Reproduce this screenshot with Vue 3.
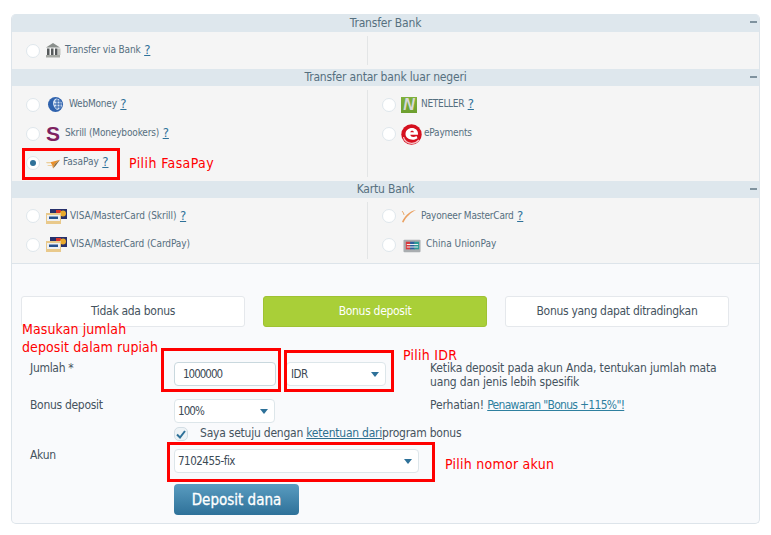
<script setup>
const sections = [
  { title: 'Transfer Bank', cols: [
    [{ name: 'Transfer via Bank', q: true, icon: 'bank', w: 21, ls: -0.12 }],
    [],
  ]},
  { title: 'Transfer antar bank luar negeri', cols: [
    [
      { name: 'WebMoney', q: true, icon: 'wm', w: 25, ls: -0.2 },
      { name: 'Skrill (Moneybookers)', q: true, icon: 'skrill', w: 21, ls: -0.15 },
      { name: 'FasaPay', q: true, icon: 'fasa', w: 19, ls: 0, checked: true },
    ],
    [
      { name: 'NETELLER', q: true, icon: 'net', w: 20, ls: -0.3 },
      { name: 'ePayments', icon: 'epay', w: 23, ls: -0.2 },
    ],
  ]},
  { title: 'Kartu Bank', cols: [
    [
      { name: 'VISA/MasterCard (Skrill)', q: true, icon: 'visa', w: 26, ls: -0.05 },
      { name: 'VISA/MasterCard (CardPay)', icon: 'visa', w: 26, ls: -0.1 },
    ],
    [
      { name: 'Payoneer MasterCard', q: true, icon: 'pay', w: 20, ls: -0.2 },
      { name: 'China UnionPay', icon: 'cup', w: 25, ls: 0 },
    ],
  ]},
]
</script>

<template>
  <div class="page">
    <div class="panel">
      <section v-for="s in sections" :key="s.title">
        <header class="head">{{ s.title }}<span class="minus"></span></header>
        <div class="body">
          <div v-for="(col, ci) in s.cols" :key="ci" class="col">
            <div v-for="m in col" :key="m.name" class="method">
              <span class="radio" :class="{ on: m.checked }"></span>
              <span class="icon" :class="'i-' + m.icon" :style="{ width: m.w + 'px' }">
                <svg v-if="m.icon === 'bank'" width="16" height="15" viewBox="0 0 16 15">
                  <path d="M8 0 15 4.500H1z" fill="#8a8f8c"/>
                  <path d="M2 5.500h2.500v6.500H2zM6 5.500h2.500v6.500H6zM10 5.500h2.500v6.500H10z" fill="#55595a"/>
                  <path d="M1 12h14v2.500H1z" fill="#a5a8a3"/>
                  <path d="M13 5.500h2.500v6.500H13z" fill="#c2c4bf"/>
                </svg>
                <svg v-else-if="m.icon === 'wm'" width="17" height="17" viewBox="0 0 17 17">
                  <circle cx="8.500" cy="8.500" r="7.500" fill="#2f62ad"/>
                  <path d="M9 2.500a6 6 0 0 1 6 6 6 6 0 0 1-5 5.500C7 12 6 9 6 7c0-2 1-3.500 3-4.500z" fill="#d6e2f2"/>
                  <path d="M8 5h7M7 8h8M8 11h6M10 3v10M13 3v10" stroke="#2f62ad" stroke-width="1" fill="none"/>
                </svg>
                <span v-else-if="m.icon === 'skrill'" class="glyph-s">S</span>
                <svg v-else-if="m.icon === 'fasa'" width="14" height="10" viewBox="0 0 16 10">
                  <path d="M5 3 16 0 10 5 8 10 7 6z" fill="#e8912d"/>
                  <path d="M0 3h6L5 4H1zM1 6h6v1H3z" fill="#e9c27d"/>
                  <path d="M8 10 10 5 16 0 11 7z" fill="#8a6a3a"/>
                </svg>
                <span v-else-if="m.icon === 'net'" class="glyph-n">N</span>
                <svg v-else-if="m.icon === 'epay'" width="21" height="21" viewBox="0 0 21 21">
                  <circle cx="10.500" cy="10.500" r="10.200" fill="#d5101f"/>
                  <path d="M2.500 13C3 17 7 19.500 11 19.300c3-.1 5.300-1.300 7-3.300" stroke="#f6c3c7" stroke-width="1.300" fill="none"/>
                  <path d="M4.500 10c0-3.500 3-6 6.500-6 3.400 0 6 2.200 6 5.800 0 .4 0 .7-.1.900H9.300c.3 1.500 1.500 2.200 3 2.200 1.100 0 2.300-.4 3.200-1l1 2.300c-1.200.9-2.900 1.500-4.700 1.500-4.300 0-7.300-2.300-7.300-5.700z" fill="#fff"/>
                  <path d="M9.200 8.300h3.900c-.3-1-1-1.600-2-1.600s-1.700.6-1.900 1.600z" fill="#d5101f"/>
                </svg>
                <svg v-else-if="m.icon === 'visa'" width="21" height="15" viewBox="0 0 21 15">
                  <rect x="4" y="0" width="17" height="10" fill="#27306b"/>
                  <rect x="10" y="1" width="5" height="4" fill="#d8332b"/>
                  <circle cx="17" cy="4.500" r="3" fill="#e9a92c"/>
                  <rect x="0" y="4" width="15" height="11" fill="#e9c98b"/>
                  <rect x="1" y="6" width="13" height="6" fill="#eef0f2"/>
                  <path d="M3 7.500h9v2.500H3z" fill="#26508f"/>
                </svg>
                <svg v-else-if="m.icon === 'pay'" width="16" height="14" viewBox="0 0 16 14">
                  <path d="M1 2c1 1 2 3 2 4" stroke="#e9a96a" stroke-width="1" fill="none"/>
                  <path d="M1 13C3 8 8 2 15 1 10 3.500 5 8 2.500 13.500z" fill="#eaa162"/>
                </svg>
                <svg v-else-if="m.icon === 'cup'" width="18" height="14" viewBox="0 0 19 14">
                  <rect x="0.500" y="0.500" width="18" height="13" rx="1" fill="#a9adb0"/>
                  <rect x="3" y="2.500" width="5" height="8" fill="#d83a3d"/>
                  <rect x="7.500" y="2.500" width="5" height="8" fill="#2b5e9c"/>
                  <rect x="12" y="2.500" width="5" height="8" fill="#2a9a95"/>
                  <path d="M4 5h12v1H4zM4 7.500h12v1H4z" fill="#eef0f2"/>
                </svg>
              </span>
              <span class="mname" :style="{ letterSpacing: m.ls + 'px' }">{{ m.name }}</span>
              <a v-if="m.q" class="q">?</a>
            </div>
          </div>
        </div>
      </section>

      <div class="bottom">
        <div class="tabs">
          <div class="tab">Tidak ada bonus</div>
          <div class="tab active">Bonus deposit</div>
          <div class="tab">Bonus yang dapat ditradingkan</div>
        </div>

        <div class="form">
          <div class="row row-amount">
            <label class="lbl">Jumlah *</label>
            <div class="fld">
              <div class="input">1000000</div>
              <div class="select cur">IDR<i class="caret"></i></div>
            </div>
            <p class="note">Ketika deposit pada akun Anda, tentukan jumlah mata uang dan jenis lebih spesifik</p>
          </div>
          <div class="row row-bonus">
            <label class="lbl">Bonus deposit</label>
            <div class="fld">
              <div class="select pct">100%<i class="caret"></i></div>
            </div>
            <p class="note">Perhatian! <a class="link tight">Penawaran "Bonus +115%"!</a></p>
          </div>
          <div class="row row-check">
            <span></span>
            <div class="agree">
              <span class="check">
                <svg width="10" height="9" viewBox="0 0 10 9"><path d="M1 4.500 4 7.500 9 1" stroke="#2e7199" stroke-width="2" fill="none"/></svg>
              </span>
              <span class="agree-text">Saya setuju dengan <a class="link dark">ketentuan dari</a>program bonus</span>
            </div>
          </div>
          <div class="row row-account">
            <label class="lbl">Akun</label>
            <div class="select acct">7102455-fix<i class="caret"></i></div>
          </div>
          <div class="row row-btn">
            <span></span>
            <button class="submit">Deposit dana</button>
          </div>
        </div>
      </div>
    </div>

    <span class="mark m-fasa"></span>
    <span class="mark m-amount"></span>
    <span class="mark m-idr"></span>
    <span class="mark m-acct"></span>
    <span class="hint h-fasa">Pilih FasaPay</span>
    <span class="hint h-amount">Masukan jumlah<br>deposit dalam rupiah</span>
    <span class="hint h-idr">Pilih IDR</span>
    <span class="hint h-acct">Pilih nomor akun</span>
  </div>
</template>

<style scoped>
.page {
  position: relative;
  width: 771px;
  height: 535px;
  background: #fff;
  padding: 14px 11px 0;
  box-sizing: border-box;
  font-family: "DejaVu Sans", sans-serif;
  font-stretch: condensed;
  color: #3c4a55;
  overflow: hidden;
}
.panel {
  width: 749px;
  height: 510px;
  box-sizing: border-box;
  border: 1px solid #dde4ea;
  border-top: 0;
  border-radius: 5px;
  background: #f9fafc;
  overflow: hidden;
}
.head {
  position: relative;
  height: 18px;
  background: #dee7ed;
  text-align: center;
  font-size: 12px;
  line-height: 18px;
  letter-spacing: -0.18px;
  color: #56707f;
}
section + section .head { height: 17px; line-height: 17px; }
.minus {
  position: absolute;
  right: 2px;
  top: 7px;
  width: 7px;
  height: 2px;
  background: #7f929e;
}
.body {
  display: flex;
  background: #f5f5f5;
  padding: 4px 0;
}
section:last-of-type .body {
  border-bottom: 1px solid #dde4ea;
  padding-bottom: 4px;
}
.col {
  flex: 0 0 356px;
  min-height: 29px;
  box-sizing: border-box;
  padding-left: 14px;
  border-right: 1px solid #e3e5e6;
}
.col + .col {
  flex: 1;
  padding-left: 14px;
  border-right: 0;
}
.col + .col .icon { padding-left: 1px; }
.method {
  display: flex;
  align-items: center;
  height: 29px;
  font-size: 10px;
  color: #566f80;
}
section:last-of-type .method { height: 28.5px; }
.radio {
  position: relative;
  flex: none;
  width: 12px;
  height: 12px;
  border: 1px solid #dfe7ec;
  border-radius: 50%;
  background: #fff;
  margin-right: 4px;
}
.radio.on::after {
  content: "";
  position: absolute;
  left: 3px;
  top: 3px;
  width: 6px;
  height: 6px;
  border-radius: 50%;
  background: #2e7199;
}
.icon {
  flex: none;
  display: flex;
  align-items: center;
  height: 20px;
}
.i-bank svg { margin-left: 1px; }
.i-wm svg { margin-left: 3px; }
.i-fasa svg { margin: 3px 0 0 2px; }
.i-visa svg { margin-left: 2px; }
.i-cup svg { margin: 2px 0 0 2px; }
.i-epay svg { margin-top: 1px; }
.glyph-s {
  font: 900 21px/20px "Liberation Sans", sans-serif;
  color: #7d2261;
  margin: 1px 0 0 2px;
}
.glyph-n {
  width: 16px;
  height: 16px;
  background: linear-gradient(#7fb13c, #6d9f2f);
  color: #d8d8d8;
  text-align: center;
  font: italic 900 16px/16px "Liberation Sans", sans-serif;
}
.mname { position: relative; top: -1px; }
.q {
  position: relative;
  top: -1px;
  margin-left: 3.5px;
  font-size: 13px;
  color: #2e7199;
  text-decoration: underline;
}
.bottom {
  padding: 32px 14px 0 9px;
}
.tabs {
  display: flex;
  gap: 18px;
  padding-right: 16px;
}
.tab {
  width: 224px;
  height: 31px;
  box-sizing: border-box;
  border: 1px solid #e5e8ec;
  border-radius: 3px;
  background: #fff;
  text-align: center;
  font-size: 12px;
  line-height: 29px;
  letter-spacing: -0.3px;
  color: #45535e;
}
.tab.active {
  background: #a9cf38;
  border-color: #9fc233;
  color: #fff;
}
.form { margin-top: 35px; }
.row {
  display: grid;
  grid-template-columns: 153px auto;
  align-items: start;
  position: relative;
  font-size: 12px;
  color: #45535e;
}
.lbl { padding-left: 9px; letter-spacing: -0.3px; line-height: 14px; margin-top: -1px; }
.fld { display: flex; gap: 10px; }
.row-amount { height: 37px; grid-template-columns: 153px 256px 1fr; }
.row-bonus { height: 28px; grid-template-columns: 153px 256px 1fr; }
.row-check { height: 22px; }
.row-account { height: 35px; }
.note {
  margin: -1px 0 0;
  line-height: 14px;
  width: 300px;
  letter-spacing: -0.15px;
}
.input, .select {
  position: relative;
  box-sizing: border-box;
  height: 24px;
  border: 1px solid #dde6ea;
  border-radius: 4px;
  background: #fff;
  line-height: 22px;
  font-size: 11.5px;
  letter-spacing: -0.5px;
  color: #3c4a55;
}
.input { width: 102px; padding-left: 8px; border-color: #c9d8de; letter-spacing: -1px; }
.select { padding-left: 3px; }
.cur { width: 100px; padding-left: 4px; }
.pct { width: 101px; letter-spacing: -0.9px; }
.acct { width: 245px; }
.caret {
  position: absolute;
  right: 6px;
  top: 9px;
  width: 0;
  height: 0;
  border-left: 4px solid transparent;
  border-right: 4px solid transparent;
  border-top: 5px solid #2e7199;
}
.agree { display: flex; align-items: center; gap: 12px; line-height: 14px; letter-spacing: -0.23px; }
.agree-text { position: relative; top: -1px; }
.check {
  display: flex;
  align-items: center;
  justify-content: center;
  width: 14px;
  height: 14px;
  border: 1px solid #d3dee5;
  border-radius: 5px;
  box-sizing: border-box;
  background: #eef3f6;
}
.link { color: #2e7f9f; text-decoration: underline; }
.link.dark { color: #2e6f8f; }
.link.tight { letter-spacing: -0.7px; }
.submit {
  width: 125px;
  height: 31px;
  border: 0;
  border-radius: 4px;
  background: linear-gradient(#5a9cc0, #2e7199);
  color: #fff;
  font: 400 15px "DejaVu Sans", sans-serif;
  font-stretch: condensed;
  -webkit-text-stroke: 0.3px #fff;
  padding: 0;
}
.mark {
  position: absolute;
  box-sizing: border-box;
  border: 3px solid #f00;
}
.m-fasa { left: 22px; top: 148px; width: 98px; height: 32px; }
.m-amount { left: 161px; top: 348px; width: 120px; height: 44px; }
.m-idr { left: 284px; top: 350px; width: 110px; height: 42px; }
.m-acct { left: 167px; top: 442px; width: 268px; height: 40px; }
.hint {
  position: absolute;
  color: #f00;
  font-size: 14px;
  line-height: 18px;
  letter-spacing: 0.25px;
  white-space: nowrap;
}
.h-fasa { left: 129px; top: 154px; letter-spacing: 0.4px; }
.h-amount { left: 22px; top: 320px; letter-spacing: 0.1px; }
.h-idr { left: 403px; top: 346px; }
.h-acct { left: 445px; top: 455px; }
</style>
